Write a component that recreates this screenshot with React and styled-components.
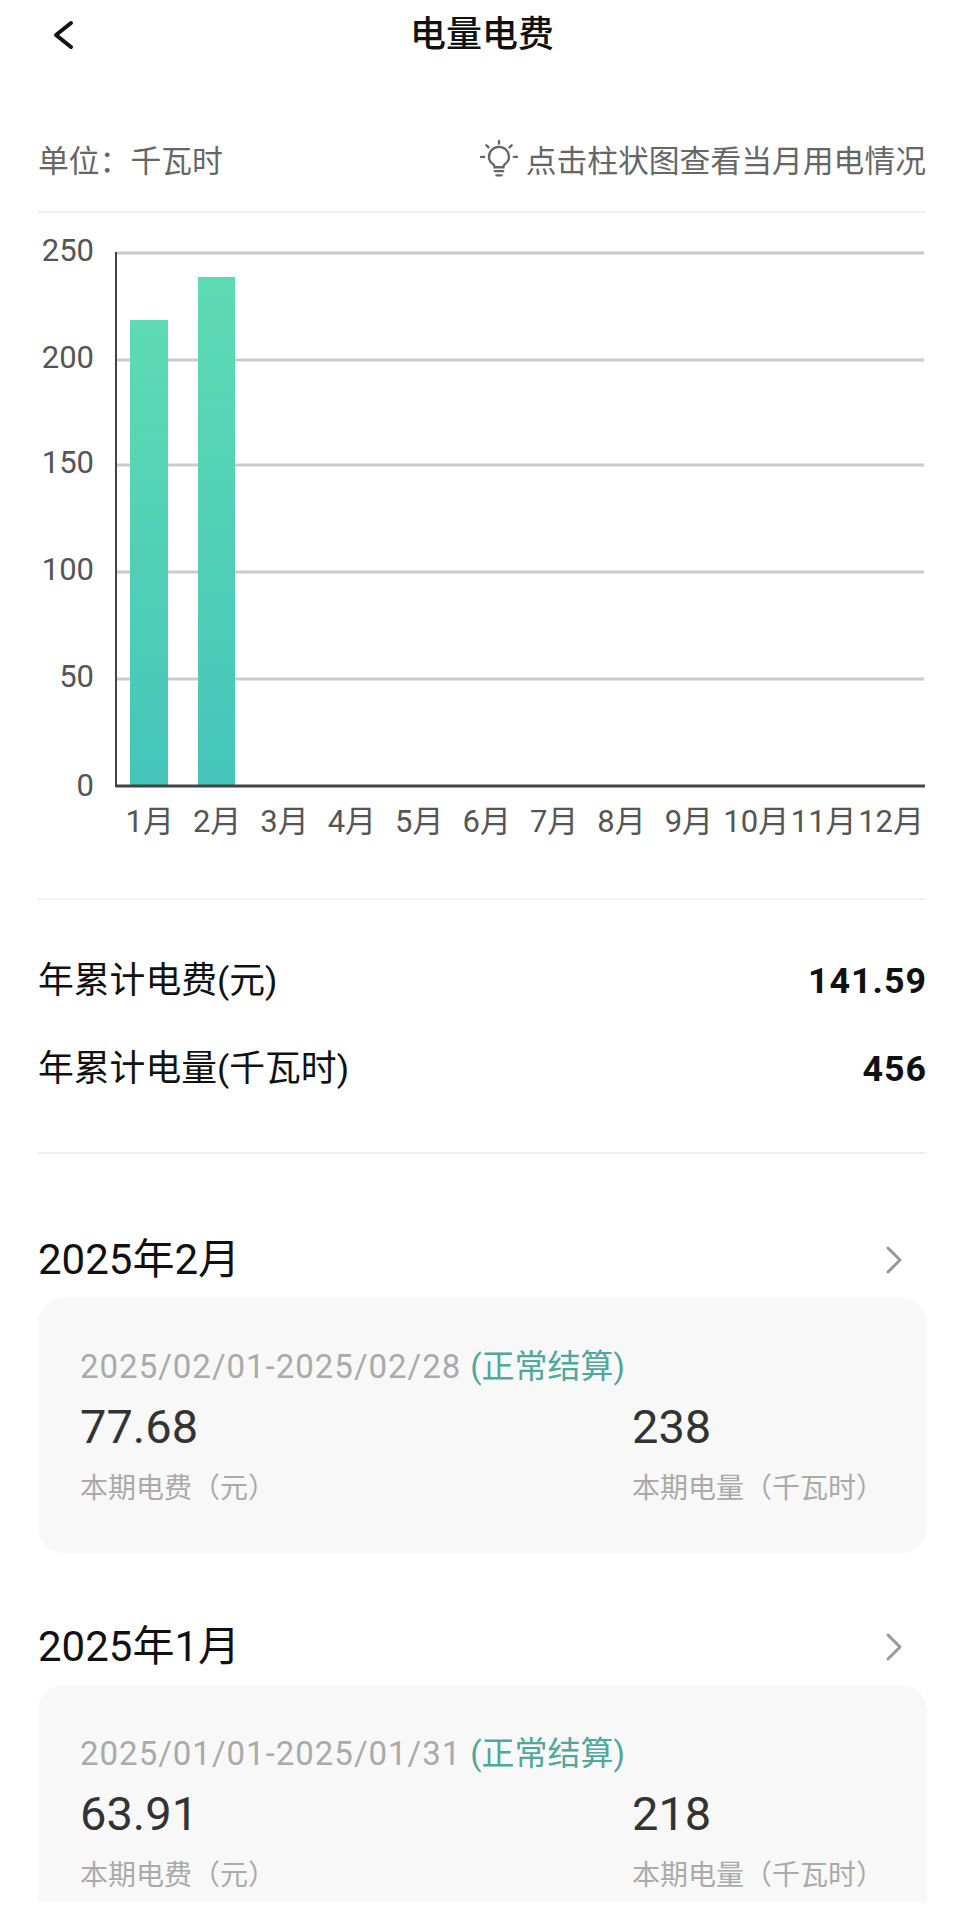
import React from "react";
import styled, { createGlobalStyle } from "styled-components";

const GlobalStyle = createGlobalStyle`
  html, body {
    margin: 0;
    padding: 0;
    background: #fff;
  }
  body {
    font-family: Roboto, "Noto Sans CJK SC", sans-serif;
  }
`;

const Page = styled.div`
  width: 964px;
  height: 1909px;
  overflow: hidden;
  box-sizing: border-box;
  padding: 0 38px;
  background: #fff;
`;

const NavBar = styled.div`
  height: 61px;
  display: flex;
  align-items: center;
  justify-content: center;
  position: relative;
`;

const BackIcon = styled.svg`
  position: absolute;
  left: 13px;
  top: 20px;
  width: 24px;
  height: 30px;
`;

const Title = styled.div`
  font-size: 36px;
  font-weight: 500;
  color: #111;
`;

const UnitRow = styled.div`
  margin-top: 75px;
  height: 77px;
  display: flex;
  align-items: center;
  justify-content: space-between;
  border-bottom: 2px solid #eee;
  box-sizing: border-box;
  font-size: 30.8px;
  color: #666;
  padding-bottom: 30px;
`;

const Hint = styled.div`
  display: flex;
  align-items: center;
  gap: 8px;
`;

const ChartSvg = styled.svg`
  display: block;
  width: 888px;
  height: 685px;
`;

const AxisText = styled.text`
  font-family: Roboto, "Noto Sans CJK SC", sans-serif;
  font-size: 31px;
  fill: #555;
`;

const Divider = styled.div`
  height: 2px;
  background: #f0f0f0;
`;

const Stats = styled.div`
  height: 252px;
  box-sizing: border-box;
  padding-top: 56px;
  display: flex;
  flex-direction: column;
  gap: 38px;
`;

const StatRow = styled.div`
  height: 50px;
  line-height: 50px;
  display: flex;
  align-items: center;
  justify-content: space-between;
  font-size: 35.8px;
  color: #111;
`;

const StatValue = styled.span`
  font-weight: 700;
  letter-spacing: 1px;
  margin-right: -1px;
`;

const Section = styled.section`
  padding-top: ${(p) => p.$top}px;
`;

const MonthRow = styled.div`
  height: 60px;
  line-height: 60px;
  display: flex;
  align-items: center;
  justify-content: space-between;
  font-size: 42px;
  color: #111;
`;

const MoreIcon = styled.svg`
  width: 20px;
  height: 32px;
  margin-right: 22px;
`;

const Card = styled.div`
  margin-top: 8px;
  width: 889px;
  height: ${(p) => p.$height}px;
  box-sizing: border-box;
  padding: 47px 42px 0;
  border-radius: ${(p) => (p.$cut ? "26px 26px 0 0" : "26px")};
  background: #f8f8f8;
`;

const Period = styled.div`
  height: 44px;
  line-height: 44px;
  font-size: 33px;
  color: #aaa;
  letter-spacing: 1px;
  white-space: nowrap;
`;

const Status = styled.span`
  color: #4fa898;
  letter-spacing: 0;
  margin-left: 9px;
`;

const Figures = styled.div`
  display: grid;
  grid-template-columns: 552px 1fr;
  margin-top: 8px;
`;

const Figure = styled.div`
  display: flex;
  flex-direction: column;
`;

const Amount = styled.div`
  height: 60px;
  line-height: 60px;
  font-size: 47px;
  color: #333;
`;

const Caption = styled.div`
  height: 40px;
  line-height: 40px;
  margin-top: 12px;
  font-size: 28px;
  color: #aaa;
  white-space: nowrap;
`;

const ticks = [
  { label: "250", y: 253 },
  { label: "200", y: 360 },
  { label: "150", y: 465 },
  { label: "100", y: 572 },
  { label: "50", y: 679 },
];
const months = ["1月", "2月", "3月", "4月", "5月", "6月", "7月", "8月", "9月", "10月", "11月", "12月"];
const bars = [
  { x: 130, w: 38, top: 320 },
  { x: 198, w: 37, top: 277 },
];

const bills = [
  {
    month: "2025年2月",
    period: "2025/02/01-2025/02/28",
    fee: "77.68",
    usage: "238",
    top: 76,
    height: 255,
  },
  {
    month: "2025年1月",
    period: "2025/01/01-2025/01/31",
    fee: "63.91",
    usage: "218",
    top: 64,
    height: 218,
    cut: true,
  },
];

function Chart() {
  return (
    <ChartSvg viewBox="38 213 888 685">
      <defs>
        <linearGradient id="bar" x1="0" y1="0" x2="0" y2="1">
          <stop offset="0" stopColor="#5edbb2" />
          <stop offset="1" stopColor="#45c5bb" />
        </linearGradient>
      </defs>
      {ticks.map((t) => (
        <line key={t.label} x1="116" x2="924" y1={t.y} y2={t.y} stroke="#cbcbcb" strokeWidth="3" />
      ))}
      <line x1="116" x2="116" y1="252" y2="787" stroke="#444" strokeWidth="2" />
      {ticks.map((t) => (
        <AxisText key={t.label} x="94" y={t.y + 8} textAnchor="end">
          {t.label}
        </AxisText>
      ))}
      <AxisText x="94" y="796" textAnchor="end">0</AxisText>
      {bars.map((b) => (
        <rect key={b.x} x={b.x} y={b.top} width={b.w} height={786 - b.top} fill="url(#bar)" />
      ))}
      <line x1="116" x2="925" y1="786" y2="786" stroke="#444" strokeWidth="3" />
      {months.map((m, i) => (
        <AxisText key={m} x={149.7 + i * 67.4} y="832" textAnchor="middle">
          {m}
        </AxisText>
      ))}
    </ChartSvg>
  );
}

function Bulb() {
  return (
    <svg width="38" height="38" viewBox="0 0 36 36" fill="none" stroke="#666" strokeWidth="2.2" strokeLinecap="round">
      <path d="M12.500 23c-2.600-1.800-4-4.300-4-7a9.500 9.500 0 0 1 19 0c0 2.700-1.400 5.200-4 7-.9.700-1.300 1.500-1.300 2.800h-8.400c0-1.300-.4-2.100-1.300-2.800z" />
      <path d="M14 29.500h8M15.500 33.500h5" />
      <path d="M18 1v2.500M6 5l2 2M30 5l-2 2M1 16h3M32 16h3" />
    </svg>
  );
}

export default function App() {
  return (
    <>
      <GlobalStyle />
      <Page>
        <NavBar>
          <BackIcon viewBox="0 0 24 30" fill="none" stroke="#111" strokeWidth="4" strokeLinecap="round" strokeLinejoin="round">
            <path d="M20 3 5 15l15 12" />
          </BackIcon>
          <Title>电量电费</Title>
        </NavBar>
        <UnitRow>
          <span>单位：千瓦时</span>
          <Hint>
            <Bulb />
            <span>点击柱状图查看当月用电情况</span>
          </Hint>
        </UnitRow>
        <Chart />
        <Divider />
        <Stats>
          <StatRow>
            <span>年累计电费(元)</span>
            <StatValue>141.59</StatValue>
          </StatRow>
          <StatRow>
            <span>年累计电量(千瓦时)</span>
            <StatValue>456</StatValue>
          </StatRow>
        </Stats>
        <Divider />
        {bills.map((b) => (
          <Section key={b.month} $top={b.top}>
            <MonthRow>
              <span>{b.month}</span>
              <MoreIcon viewBox="0 0 20 32" fill="none" stroke="#999" strokeWidth="3" strokeLinecap="round" strokeLinejoin="round">
                <path d="M4 4l12 12L4 28" />
              </MoreIcon>
            </MonthRow>
            <Card $height={b.height} $cut={b.cut}>
              <Period>
                {b.period}
                <Status>(正常结算)</Status>
              </Period>
              <Figures>
                <Figure>
                  <Amount>{b.fee}</Amount>
                  <Caption>本期电费（元）</Caption>
                </Figure>
                <Figure>
                  <Amount>{b.usage}</Amount>
                  <Caption>本期电量（千瓦时）</Caption>
                </Figure>
              </Figures>
            </Card>
          </Section>
        ))}
      </Page>
    </>
  );
}
